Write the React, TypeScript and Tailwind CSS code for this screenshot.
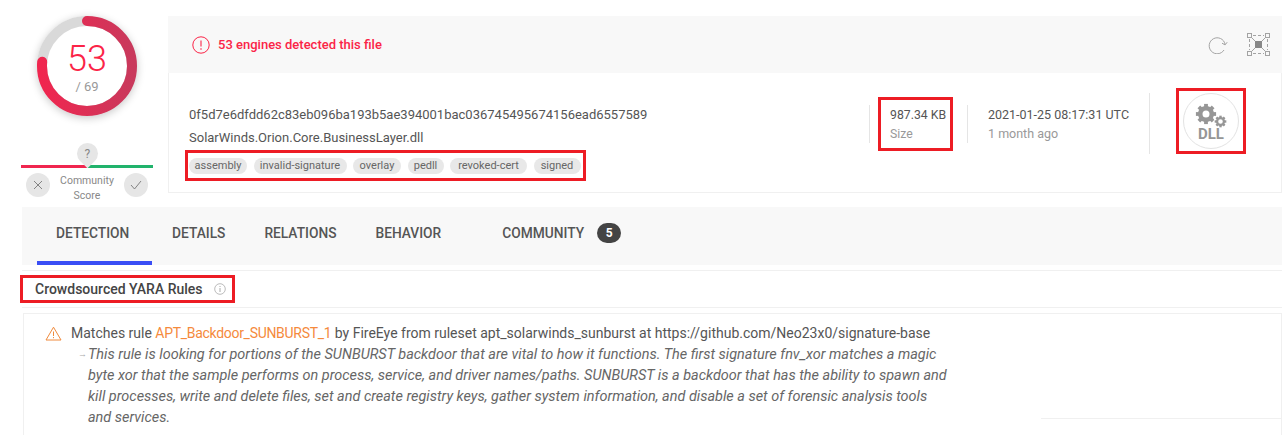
import React from "react";

const Tag = ({ t, w }: { t: string; w: string }) => (
  <span className={`h-[16px] rounded-full bg-[#e8e8e8] text-[11px] leading-[16px] text-center text-[#666] ${w}`}>{t}</span>
);

function Gear({ cx, cy, r, hole, teeth, w }: { cx: number; cy: number; r: number; hole: number; teeth: number; w: number }) {
  const items = [];
  for (let i = 0; i < teeth; i++) {
    const a = (360 / teeth) * i;
    items.push(
      <rect key={i} x={cx - w / 2} y={cy - r - w * 0.55} width={w} height={w} transform={`rotate(${a} ${cx} ${cy})`} fill="#969696" />
    );
  }
  return (
    <g>
      {items}
      <circle cx={cx} cy={cy} r={r - hole / 2} fill="none" stroke="#969696" strokeWidth={hole} />
    </g>
  );
}

export default function App() {
  return (
    <div className="w-[1286px] h-[435px] overflow-hidden bg-white relative font-['Roboto','Liberation_Sans',sans-serif] text-[#444]">
      <div className="flex h-[207px] pt-[16px]">
        <div className="w-[168px] shrink-0 flex flex-col items-center pl-[13px] pr-[7px]">
          <div className="relative w-[100px] h-[100px] shrink-0 rounded-full shadow-[0_2px_8px_rgba(0,0,0,0.22)] bg-white">
            <svg viewBox="0 0 100 100" className="absolute inset-0 w-[100px] h-[100px]">
              <defs>
                <linearGradient id="g" x1="0" y1="0" x2="0" y2="1">
                  <stop offset="0" stopColor="#f0264f" />
                  <stop offset="1" stopColor="#c9395c" />
                </linearGradient>
              </defs>
              <circle cx="50" cy="50" r="45" fill="none" stroke="#d9d9d9" strokeWidth="10" />
              <circle cx="50" cy="50" r="45" fill="none" stroke="url(#g)" strokeWidth="10" strokeLinecap="round" strokeDasharray="216 283" transform="rotate(-90 50 50)" />
            </svg>
            <div className="absolute inset-0 flex flex-col items-center">
              <div className="mt-[24px] text-[36px] leading-[38px] text-[#fb2447] font-light">53</div>
              <div className="mt-[1px] text-[13px] leading-[16px] text-[#999]">/ 69</div>
            </div>
          </div>
          <div className="mt-[27px] w-[21px] h-[21px] shrink-0 rotate-45 rounded-full rounded-br-none bg-[#e6e6e6] flex items-center justify-center">
            <span className="-rotate-45 text-[12px] leading-[12px] text-[#888]">?</span>
          </div>
          <div className="mt-[1px] w-[132px] h-[3px] shrink-0 flex">
            <div className="w-1/2 bg-[#f0264f]" />
            <div className="w-1/2 bg-[#21b36c]" />
          </div>
          <div className="mt-[5px] w-[132px] flex items-start justify-between px-[5px]">
            <div className="w-[24px] h-[24px] rounded-full bg-[#e6e6e6] flex items-center justify-center">
              <svg width="10" height="10" viewBox="0 0 10 10"><path d="M1 1l8 8M9 1l-8 8" stroke="#777" strokeWidth="0.9" fill="none" /></svg>
            </div>
            <div className="text-[10.5px] leading-[15px] text-[#888] text-center">Community<br />Score</div>
            <div className="w-[24px] h-[24px] rounded-full bg-[#e6e6e6] flex items-center justify-center">
              <svg width="12" height="10" viewBox="0 0 12 10"><path d="M1 5l3.5 4L11 1" stroke="#777" strokeWidth="0.9" fill="none" /></svg>
            </div>
          </div>
        </div>

        <div className="w-[1114px] flex flex-col h-[177px]">
          <div className="h-[57px] shrink-0 bg-[#f8f8f8] flex items-center justify-between pl-[24px] pr-[12px]">
            <div className="flex items-center gap-[8px] text-[13px] font-medium text-[#fb2447]">
              <svg width="18" height="18" viewBox="0 0 18 18">
                <circle cx="9" cy="9" r="8.2" fill="none" stroke="#fb2447" strokeWidth="1" />
                <path d="M9 4.5v6" stroke="#fb2447" strokeWidth="1.1" />
                <circle cx="9" cy="13" r="0.8" fill="#fb2447" />
              </svg>
              <span>53 engines detected this file</span>
            </div>
            <div className="flex items-center gap-[19px]">
              <svg width="20" height="18" viewBox="0 0 20 18">
                <path d="M16 14A8 8 0 1 1 17 8" fill="none" stroke="#a3a3a3" strokeWidth="1" />
                <path d="M19.2 6.2L17.1 8.9 14 7.2" fill="none" stroke="#a3a3a3" strokeWidth="1" />
              </svg>
              <svg width="23" height="23" viewBox="0 0 23 23">
                <g fill="none" stroke="#a3a3a3" strokeWidth="1">
                  <rect x="0.5" y="0.5" width="4" height="4" />
                  <rect x="18.5" y="0.5" width="4" height="4" />
                  <rect x="0.5" y="18.5" width="4" height="4" />
                  <rect x="18.5" y="18.5" width="4" height="4" />
                  <path d="M6 2.5h11M6 20.5h11M2.5 6v11M20.5 6v11" strokeDasharray="3 2" />
                  <path d="M4 4l15 15M19 4L4 19" />
                </g>
                <rect x="8" y="8" width="7" height="7" fill="#888" />
              </svg>
            </div>
          </div>
          <div className="flex-1 flex items-start border-b border-r border-[#f0f0f0] border-l pl-[16px]">
            <div className="w-[684px] shrink-0 pt-[32px]">
              <div className="pl-[4px] text-[13px] leading-[20px] text-[#555]">0f5d7e6dfdd62c83eb096ba193b5ae394001bac036745495674156ead6557589</div>
              <div className="pl-[4px] text-[13px] leading-[18px] mt-[4px] text-[#555]">SolarWinds.Orion.Core.BusinessLayer.dll</div>
              <div className="mt-[3px] w-[401px] h-[31px] border-[3px] border-[#ed1c24] flex items-center gap-[6.5px] pl-[1px]">
                <Tag t="assembly" w="w-[58px]" />
                <Tag t="invalid-signature" w="w-[93px]" />
                <Tag t="overlay" w="w-[48px]" />
                <Tag t="pedll" w="w-[36px]" />
                <Tag t="revoked-cert" w="w-[77px]" />
                <Tag t="signed" w="w-[47px]" />
              </div>
            </div>
            <div className="w-px h-[38px] mt-[32px] shrink-0 bg-[#e5e5e5]" />
            <div className="ml-[8px] mt-[24px] w-[75px] h-[54px] shrink-0 border-[3px] border-[#ed1c24] pl-[9px] pt-[6px] text-[12.25px] leading-[19px]">
              <div className="text-[#555] whitespace-nowrap">987.34 KB</div>
              <div className="text-[#999]">Size</div>
            </div>
            <div className="ml-[14px] mt-[32px] w-px h-[38px] bg-[#e5e5e5]" />
            <div className="ml-[20px] mt-[32px] w-[161px] text-[12.5px] leading-[19px]">
              <div className="text-[#555] whitespace-nowrap">2021-01-25 08:17:31 UTC</div>
              <div className="text-[#999]">1 month ago</div>
            </div>
            <div className="w-px h-[61px] mt-[20px] bg-[#e5e5e5]" />
            <div className="ml-[26px] mt-[15px] w-[70px] h-[66px] border-[3px] border-[#ed1c24] flex items-center justify-center">
              <div className="w-[56px] h-[56px] rounded-full border border-[#e3e3e3] relative flex items-center justify-center">
                <svg width="56" height="56" viewBox="0 0 56 56" className="absolute -inset-px">
                  <Gear cx={23} cy={21} r={8} hole={4.5} teeth={8} w={3.8} />
                  <circle cx={37.5} cy={28.5} r={6.8} fill="#fff" />
                  <Gear cx={37.5} cy={28.5} r={4.5} hole={2.2} teeth={8} w={2.4} />
                </svg>
                <span className="absolute top-[32px] text-[15px] leading-[16px] font-bold text-[#969696]">DLL</span>
              </div>
            </div>
          </div>
        </div>
      </div>

      <div className="ml-[22px] mr-[4px] h-[58px] bg-[#f8f8f8] flex items-start pl-[15px] text-[13.75px] font-medium text-[#555]">
        <div className="w-[115px] h-[58px] border-b-[4px] border-[#3a4ef5] pt-[16px] pl-[19px] leading-[20px]">DETECTION</div>
        <div className="ml-[20px] pt-[16px] leading-[20px]">DETAILS</div>
        <div className="ml-[39px] pt-[16px] leading-[20px]">RELATIONS</div>
        <div className="ml-[39px] pt-[16px] leading-[20px]">BEHAVIOR</div>
        <div className="ml-[61px] pt-[16px] leading-[20px]">COMMUNITY</div>
        <div className="ml-[13px] mt-[16px] w-[24px] h-[20px] rounded-full bg-[#444] text-white text-[12px] font-bold leading-[20px] text-center">5</div>
      </div>

      <div className="ml-[22px] mr-[4px] mt-[5px] border-t border-[#f0f0f0] h-[38px] border-b">
        <div className="-ml-[2px] mt-[4px] w-[215px] h-[28px] border-[3px] border-[#ed1c24] flex items-center pl-[12px] text-[14px] font-medium text-[#444]">
          Crowdsourced YARA Rules
          <svg className="ml-[11px]" width="12" height="12" viewBox="0 0 12 12">
            <circle cx="6" cy="6" r="5.3" fill="none" stroke="#aaa" strokeWidth="0.8" />
            <path d="M6 5v4M6 3v1" stroke="#aaa" strokeWidth="1" />
          </svg>
        </div>
      </div>

      <div className="ml-[23px] mr-[4px] mt-[5px] border-l border-r border-t border-[#f0f0f0] h-[130px] pl-[21px] pt-[9px] relative">
        <div className="flex items-center text-[14px] leading-[21px] text-[#555] whitespace-nowrap">
          <svg width="17" height="15" viewBox="0 0 17 15" className="shrink-0 mr-[9px]">
            <path d="M8.5 1.2L16 14H1z" fill="none" stroke="#f08a3c" strokeWidth="1" />
            <path d="M8.5 5.5v4.5M8.5 11v1.2" stroke="#f08a3c" strokeWidth="1" />
          </svg>
          <span>Matches rule <span className="text-[#f58a3c] tracking-[-0.3px]">APT_Backdoor_SUNBURST_1</span> by FireEye from ruleset apt_solarwinds_sunburst at https://github.com/Neo23x0/signature-base</span>
        </div>
        <div className="pl-[43px] relative w-[930px] text-[14.45px] leading-[21px] italic text-[#666] whitespace-nowrap">
          <span className="absolute left-[33px] top-0 not-italic text-[9px] text-[#aaa]">→</span>
          This rule is looking for portions of the SUNBURST backdoor that are vital to how it functions. The first signature fnv_xor matches a magic<br />byte xor that the sample performs on process, service, and driver names/paths. SUNBURST is a backdoor that has the ability to spawn and<br />kill processes, write and delete files, set and create registry keys, gather system information, and disable a set of forensic analysis tools<br />and services.
        </div>
        <div className="absolute right-0 bottom-[24px] w-[240px] h-px bg-[#f0f0f0]" />
      </div>
    </div>
  );
}
